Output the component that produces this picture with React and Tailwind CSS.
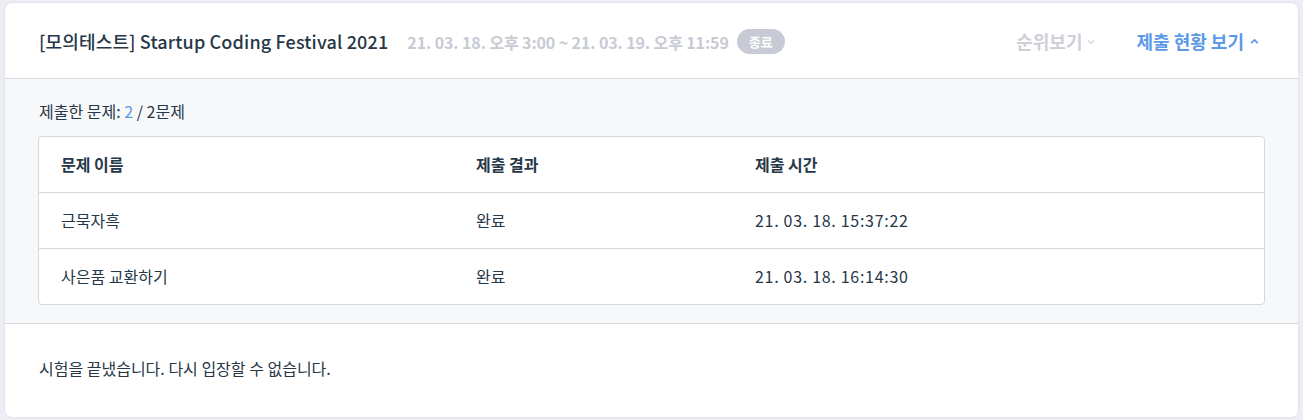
import React from "react";

const font = { fontFamily: '"Noto Sans CJK KR", "Noto Sans", sans-serif' };

const rows = [
  { name: "근묵자흑", result: "완료", time: "21. 03. 18. 15:37:22" },
  { name: "사은품 교환하기", result: "완료", time: "21. 03. 18. 16:14:30" },
];

function ChevronDown({ className }) {
  return (
    <svg viewBox="0 0 10 10" className={className} fill="none" stroke="currentColor" strokeWidth="1.2">
      <path d="M2 3.5 L5 6.5 L8 3.5" />
    </svg>
  );
}

function ChevronUp({ className }) {
  return (
    <svg viewBox="0 0 10 10" className={className} fill="none" stroke="currentColor" strokeWidth="1.5">
      <path d="M2 6.5 L5 3.5 L8 6.5" />
    </svg>
  );
}

export default function App() {
  return (
    <div className="h-[420px] bg-[#eceef3] px-[4px] py-[2px]" style={font}>
      <div className="flex h-full flex-col overflow-hidden rounded-[8px] border border-[#e3e5ea] bg-white">
        {/* 상단 헤더 */}
        <div className="flex h-[76px] shrink-0 items-center border-b border-[#d5d8df] pl-[34px] pr-[38px] pt-[2px]">
          <h1 className="text-[18px] font-medium tracking-[0.15px] text-[#263747]">
            [모의테스트] Startup Coding Festival 2021
          </h1>
          <span className="ml-[19px] text-[16px] font-bold tracking-[-0.1px] text-[#c8cbd3]">
            21. 03. 18. 오후 3:00 ~ 21. 03. 19. 오후 11:59
          </span>
          <span className="ml-[8px] flex h-[25px] items-center rounded-full bg-[#c8cbd5] px-[12px] text-[13px] font-bold text-white">
            종료
          </span>
          <div className="ml-auto flex items-center">
            <button className="flex items-center text-[18px] font-bold text-[#cdd0d8]">
              순위보기
              <ChevronDown className="ml-[4px] h-[10px] w-[10px]" />
            </button>
            <button className="ml-[40px] flex items-center text-[18px] font-bold text-[#5c9ae8]">
              제출 현황 보기
              <ChevronUp className="ml-[5px] h-[11px] w-[11px]" />
            </button>
          </div>
        </div>

        {/* 제출 현황 */}
        <div className="shrink-0 border-b border-[#d5d8df] bg-[#f7f8fa] px-[33px] pb-[18px] pt-[20px]">
          <p className="pl-[1px] text-[16px] leading-[24px] text-[#263747]">
            제출한 문제: <span className="text-[#5c9ae8]">2</span> / 2문제
          </p>
          <div className="mt-[13px] overflow-hidden rounded-[4px] border border-[#d5d8df] bg-white">
            <table className="w-full border-collapse text-left text-[16px] text-[#263747]">
              <thead>
                <tr className="h-[55px]">
                  <th className="w-[415px] pl-[22px] font-bold">문제 이름</th>
                  <th className="w-[279px] pl-[22px] font-bold">제출 결과</th>
                  <th className="pl-[22px] font-bold">제출 시간</th>
                </tr>
              </thead>
              <tbody>
                {rows.map((r) => (
                  <tr key={r.name} className="h-[56px] border-t border-[#d5d8df]">
                    <td className="pl-[22px]">{r.name}</td>
                    <td className="pl-[22px]">{r.result}</td>
                    <td className="pl-[22px] tracking-[0.7px]">{r.time}</td>
                  </tr>
                ))}
              </tbody>
            </table>
          </div>
        </div>

        {/* 안내 */}
        <div className="flex flex-1 items-center px-[34px] pb-[5px]">
          <p className="text-[16px] text-[#263747]">시험을 끝냈습니다. 다시 입장할 수 없습니다.</p>
        </div>
      </div>
    </div>
  );
}
